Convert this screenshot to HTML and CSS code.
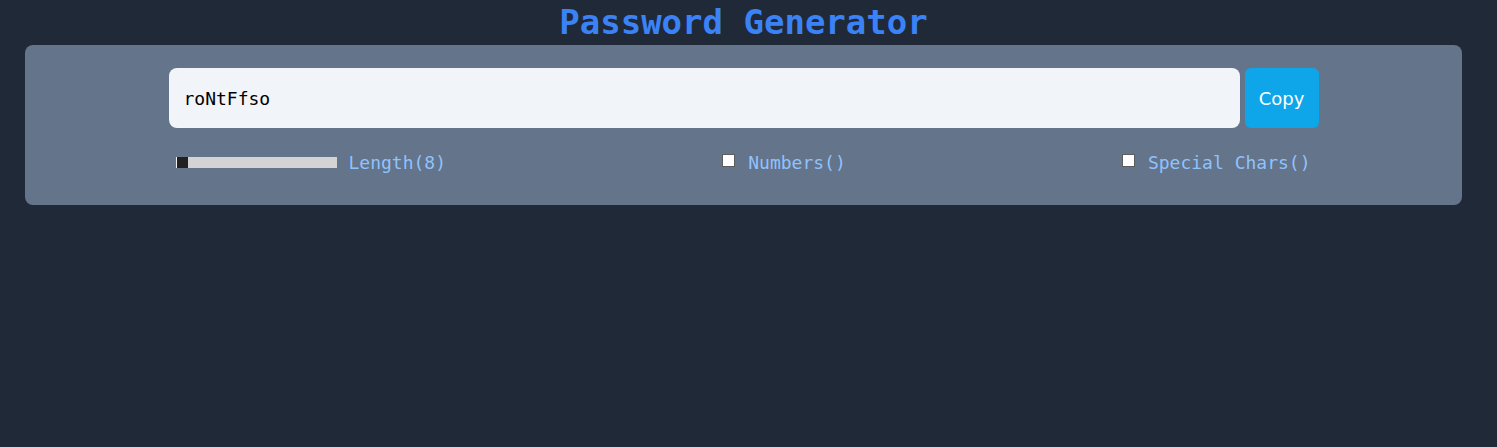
FILE: index.html
```html
<!DOCTYPE html>
<html lang="en">
<head>
<meta charset="utf-8">
<title>Password Generator</title>
<link rel="stylesheet" href="styles.css">
</head>
<body>
  <div class="page">
    <h1 class="title">Password Generator</h1>
    <div class="card">
      <div class="group">
        <div class="output-row">
          <input class="output" type="text" value="roNtFfso" readonly>
          <button class="copy-btn">Copy</button>
        </div>
        <div class="options">
          <label class="option">
            <input class="range" type="range" min="8" max="100" value="8">
            <span class="opt-label">Length(8)</span>
          </label>
          <label class="option">
            <input class="check" type="checkbox">
            <span class="opt-label">Numbers()</span>
          </label>
          <label class="option">
            <input class="check" type="checkbox">
            <span class="opt-label">Special Chars()</span>
          </label>
        </div>
      </div>
    </div>
  </div>
</body>
</html>
```

FILE: styles.css
```css
html, body {
  margin: 0;
  padding: 0;
  background: #1f2937;
  height: 100%;
}

.page {
  padding: 0 35px 0 25px;
  font-family: "DejaVu Sans Mono", "Liberation Mono", monospace;
}

.title {
  margin: 0;
  text-align: center;
  font-size: 34px;
  line-height: 45px;
  font-weight: bold;
  color: #3b82f6;
}

.card {
  background: #64748b;
  border-radius: 8px;
  padding: 23px 0 32px;
}

.group {
  width: 1150px;
  margin: 0 auto;
}

.output-row {
  display: flex;
  gap: 5px;
}

.output {
  flex: 1;
  height: 60px;
  box-sizing: border-box;
  border: none;
  outline: none;
  border-radius: 8px;
  background: #f1f5f9;
  padding: 0 15px;
  font-family: "DejaVu Sans Mono", "Liberation Mono", monospace;
  font-size: 18px;
  color: #000;
}

.copy-btn {
  width: 74px;
  height: 60px;
  border: none;
  border-radius: 6px;
  background: #0ea5e9;
  color: #fff;
  font-family: "DejaVu Sans", "Noto Sans", sans-serif;
  font-size: 18px;
  padding: 0;
  cursor: pointer;
}

.options {
  display: flex;
  justify-content: space-between;
  align-items: center;
  margin-top: 24px;
  padding: 0 8px 0 7px;
  height: 21px;
}

.option {
  display: flex;
  align-items: center;
  font-size: 18px;
  line-height: 21px;
  color: #90c2fc;
}

.range {
  -webkit-appearance: none;
  appearance: none;
  width: 161px;
  height: 11px;
  margin: 0 12px 0 0;
  background: #d4d4d4;
  border-left: 1px solid #eeeeee;
  box-sizing: border-box;
  outline: none;
}

.range::-webkit-slider-thumb {
  -webkit-appearance: none;
  appearance: none;
  width: 11px;
  height: 11px;
  background: #222222;
  border: none;
  border-radius: 0;
}

.check {
  -webkit-appearance: none;
  appearance: none;
  width: 13px;
  height: 13px;
  box-sizing: border-box;
  background: #ffffff;
  border: 1px solid #5c5c5c;
  border-radius: 0;
  margin: 0 13px 4px 4px;
}
```
